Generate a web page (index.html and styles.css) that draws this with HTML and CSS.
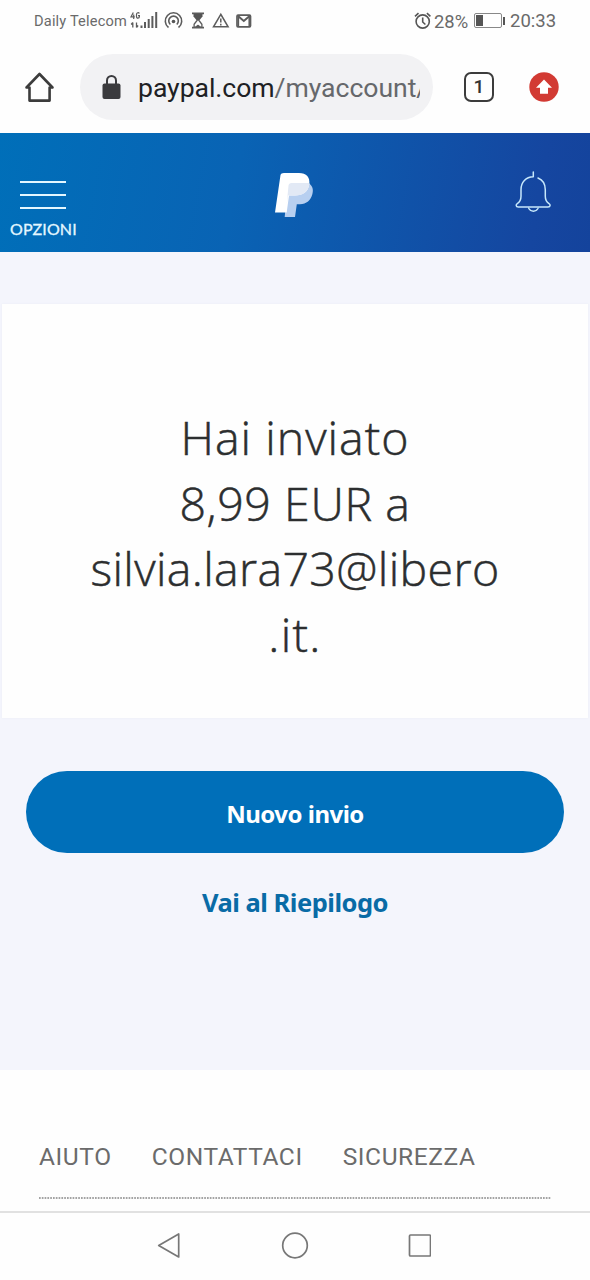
FILE: index.html
```
<!DOCTYPE html>
<html lang="it">
<head>
<meta charset="utf-8">
<title>PayPal</title>
<link rel="stylesheet" href="styles.css">
</head>
<body>
<div class="status">
  <span class="carrier">Daily Telecom</span>
  <svg class="status-icons" width="124" height="22" viewBox="130 10 124 22" fill="none" stroke="#5c5c5c">
    <g stroke-width="1.2"><path d="M133.300 12.500l-2.300 4.400h3.800M133.700 14.500v4.500M139.300 13.500c-.5-1.300-2.800-1.100-2.800 1v2c0 2.200 2.900 2.100 2.900 0v-.8h-1.400"/></g>
    <path d="M132.800 22.500v5m-1.600-3l1.600-2M136.500 22.500v5m1.600-2l-1.600 2" stroke-width="1.300"/>
    <path d="M141.500 25.500v2.500M145 22v6M148.700 19v9M152.400 16v12M156.200 12v16" stroke-width="2"/>
    <path d="M168.500 27.500a8.200 8.200 0 1 1 10 0M170.300 24.500a4.800 4.800 0 1 1 6.500 0" stroke-width="1.600"/>
    <circle cx="173.500" cy="21.500" r="1.800" fill="#555" stroke="none"/>
    <path d="M192 13.300h12M192 27.700h12" stroke-width="1.700"/><path d="M193.500 14h9v2.500l-3.300 4-1.200.6-1.200-.6-3.300-4z" fill="#555" stroke="none"/><path d="M197 20.500l-2.900 3.800v3h7.800v-3l-2.900-3.800" stroke-width="1.300"/><path d="M195.500 27l2.500-2 2.500 2z" fill="#555"/>
    <path d="M220.800 14.300l-7.300 12.500h14.600z" stroke-width="1.500"/><path d="M220.800 18.500v4M220.800 23.800v1.600" stroke-width="1.500"/>
    <rect x="237" y="15.200" width="13.500" height="11.600" rx="1" stroke-width="1.700"/><path d="M238 16l5.800 5 5.800-5" stroke-width="2"/><path d="M238.400 16v10M249.200 16v10" stroke-width="1.500"/>
  </svg>
  <div class="status-right">
    <svg width="18" height="19" viewBox="414 11.500 18 19" fill="none" stroke="#555" stroke-width="1.600"><circle cx="422.700" cy="21" r="6.600"/><path d="M422.700 17v4.500l2.700 2.500M415 15.800l3.500-3.200M430.400 15.800l-3.500-3.200"/></svg>
    <span class="percent">28%</span>
    <svg class="battery" width="33" height="17" viewBox="473 12 33 17" fill="none" stroke="#888"><rect x="474.500" y="13.500" width="27" height="14" rx="1.500"/><path d="M476 15h7v11h-7z" fill="#555" stroke="none"/><path d="M504 17v8" stroke="#555" stroke-width="2"/></svg>
    <span class="clock">20:33</span>
  </div>
</div>
<div class="browser">
  <svg class="home" width="32" height="32" viewBox="24 71 32 32" fill="none" stroke="#3c3c3c" stroke-width="2.600" stroke-linejoin="round" stroke-linecap="round"><path d="M29.500 100V87.500h-3L39.500 74 52.500 87.500h-2.900v13.100H29.500z"/></svg>
  <div class="address">
    <svg width="20" height="26" viewBox="101 73 20 26"><rect x="102.500" y="82.500" width="18" height="15.500" rx="2" fill="#3b3b3e"/><path d="M107 83v-3.500a4.500 4.500 0 0 1 9 0V83" fill="none" stroke="#3b3b3e" stroke-width="2"/></svg>
    <div class="url">paypal.com<span class="path">/myaccount/</span></div>
  </div>
  <div class="tabs">1</div>
  <svg class="update" width="30" height="30" viewBox="529 72 30 30"><circle cx="544" cy="87" r="14.700" fill="#d23a33"/><path d="M544 79.500l8 8.200h-4v6h-8v-6h-4z" fill="#fff"/></svg>
</div>
<header class="header">
  <div class="options"><div class="lines"><i></i><i></i><i></i></div><span class="options-label">OPZIONI</span></div>
  <svg class="logo" width="40" height="46" viewBox="274 172 40 46"><path d="M288 183h20.500c4 2.500 5.200 6.500 3.900 11-1.600 6-5.900 10.300-12.400 10.300h-3.200L295 217h-10.300z" fill="#b7cff0"/><path d="M284 173H299c7.500 0 11.300 4.500 10.300 11-1 8-6.800 11.500-14.300 11.500h-6l-2.300 17H275l5.500-37.500c.3-1.300 1.500-2 3.500-2z" fill="#fff"/><path d="M291.500 183h17.800c0 8-6 12.500-14 12.500H288l-1.300 9 1.800-19c.2-1.600 1.300-2.500 3-2.500z" fill="#e2e9f5"/></svg>
  <svg class="bell" width="38" height="42" viewBox="514 170 38 42" fill="none" stroke="#c7e8fb" stroke-width="1.500" stroke-linecap="round" stroke-linejoin="round"><path d="M533.300 171v4.800c-7.500.2-12.300 5.500-12.300 13v6.500c0 3.500-1.300 5.800-3.700 7.300-1.600 1-1.600 3.400 1 3.400h29.700c2.600 0 2.600-2.400 1-3.400-2.400-1.500-3.700-3.800-3.700-7.300v-6.500c0-5.600-2.800-10-7.300-11.800M528.800 207.500c2 3.500 7.200 3.500 9.200 0"/></svg>
</header>
<main class="main">
  <section class="card">
    <h1 class="message"><span class="l1">Hai inviato</span><span class="l2">8,99 EUR a</span><span class="l3">silvia.lara73@libero</span><span class="l4">.it.</span></h1>
  </section>
  <a class="button"><span>Nuovo invio</span></a>
  <a class="link"><span>Vai al Riepilogo</span></a>
</main>
<footer class="footer">
  <nav class="footer-links"><span>AIUTO</span><span>CONTATTACI</span><span>SICUREZZA</span></nav>
  <svg class="rule" width="512" height="2"><path d="M0 1h512" stroke="#858585" stroke-width="1.600" stroke-dasharray="1.700 1.100"/></svg>
</footer>
<div class="system-nav">
  <svg width="274" height="30" viewBox="157 1231 274 30" fill="none" stroke="#777" stroke-width="1.700" stroke-linejoin="round"><path d="M178.700 1234v23l-20-11.500z"/><circle cx="295" cy="1245.500" r="12.300"/><rect x="409.500" y="1235" width="21" height="21" rx="1"/></svg>
</div>
</body>
</html>
```
FILE: styles.css
```
* { box-sizing: border-box; }
body { margin: 0; width: 590px; height: 1280px; overflow: hidden; background: #fefefe; font-family: Roboto, sans-serif; display: flex; flex-direction: column; }
svg { display: block; flex: none; }
.status { height: 42px; display: flex; align-items: center; color: #6a6a6a; padding-left: 34px; white-space: nowrap; }
.carrier { width: 96px; font-size: 14.6px; letter-spacing: .18px; }
.status-right { display: flex; align-items: center; margin-left: 160px; }
.percent { font-size: 18.4px; width: 39px; margin-left: 2px; }
.battery { margin-top: -2px; }
.clock { font-size: 18.5px; margin-left: 4px; }
.browser { height: 91px; display: flex; align-items: center; padding: 0 0 1px 24px; }
.address { width: 353px; height: 66px; margin-left: 24px; border-radius: 33px; background: #f2f2f4; padding-left: 21px; display: flex; align-items: center; }
.url { margin-left: 17px; width: 282px; overflow: hidden; white-space: nowrap; font-size: 26.6px; line-height: 38px; color: #202124; padding-top: 1px; letter-spacing: -.05px; }
.path { color: #66686b; }
.tabs { width: 30px; height: 30px; margin-left: 31px; border: 2.6px solid #3c3c3c; border-radius: 7px; font-size: 19px; font-weight: 500; line-height: 26px; text-align: center; color: #333; }
.update { margin-left: 35px; }
.header { height: 119px; flex: none; background: linear-gradient(100deg, #006fb9 0%, #0963b4 40%, #1546a0 90%, #14439c 100%); display: flex; align-items: flex-start; color: #e4f7ff; }
.options { width: 86px; padding-top: 48px; }
.lines { width: 46px; margin-left: 20px; display: flex; flex-direction: column; gap: 11px; }
.lines i { height: 2px; background: #e4f7ff; }
.options-label { display: block; margin: 10px 0 0 10px; font: 400 16px/20px Lato, sans-serif; letter-spacing: .1px; -webkit-text-stroke: .3px; }
.logo { margin: 39px 0 0 188px; }
.bell { margin: 38px 0 0 200px; }
.main { height: 818px; flex: none; background: #f4f5fc; padding-top: 52px; }
.card { height: 414px; margin: 0 2px; background: #fefefe; box-shadow: 0 0 2px #ecedf4; padding-top: 101px; }
.message { margin: 0; color: #2c2e2f; font: 300 46.5px/65.5px "Open Sans", sans-serif; -webkit-text-stroke: .5px; }
.message span { display: block; width: max-content; margin: 0 auto; }
.l1 { letter-spacing: 1px; }
.l2 { letter-spacing: .6px; }
.l3 { letter-spacing: .35px; }
.l4 { letter-spacing: 1.3px; }
.button { display: flex; height: 82px; margin: 53px 26px 0; border-radius: 41px; background: #006fb9; color: #fff; align-items: center; justify-content: center; font: 700 24px/32px "Noto Sans", sans-serif; letter-spacing: -.5px; padding-top: 3px; }
.link { display: flex; justify-content: center; margin-top: 32px; color: #096ba6; font: 700 25.5px/34px "Noto Sans", sans-serif; letter-spacing: -.5px; }
.footer { height: 141px; flex: none; padding: 70px 0 0 39px; }
.footer-links { display: flex; gap: 40px; color: #6b6b6b; font-size: 24.5px; line-height: 34px; letter-spacing: .6px; }
.rule { margin-top: 23px; }
.system-nav { flex: 1; border-top: 2px solid #e1e1e1; padding: 18px 0 0 157px; }
```
